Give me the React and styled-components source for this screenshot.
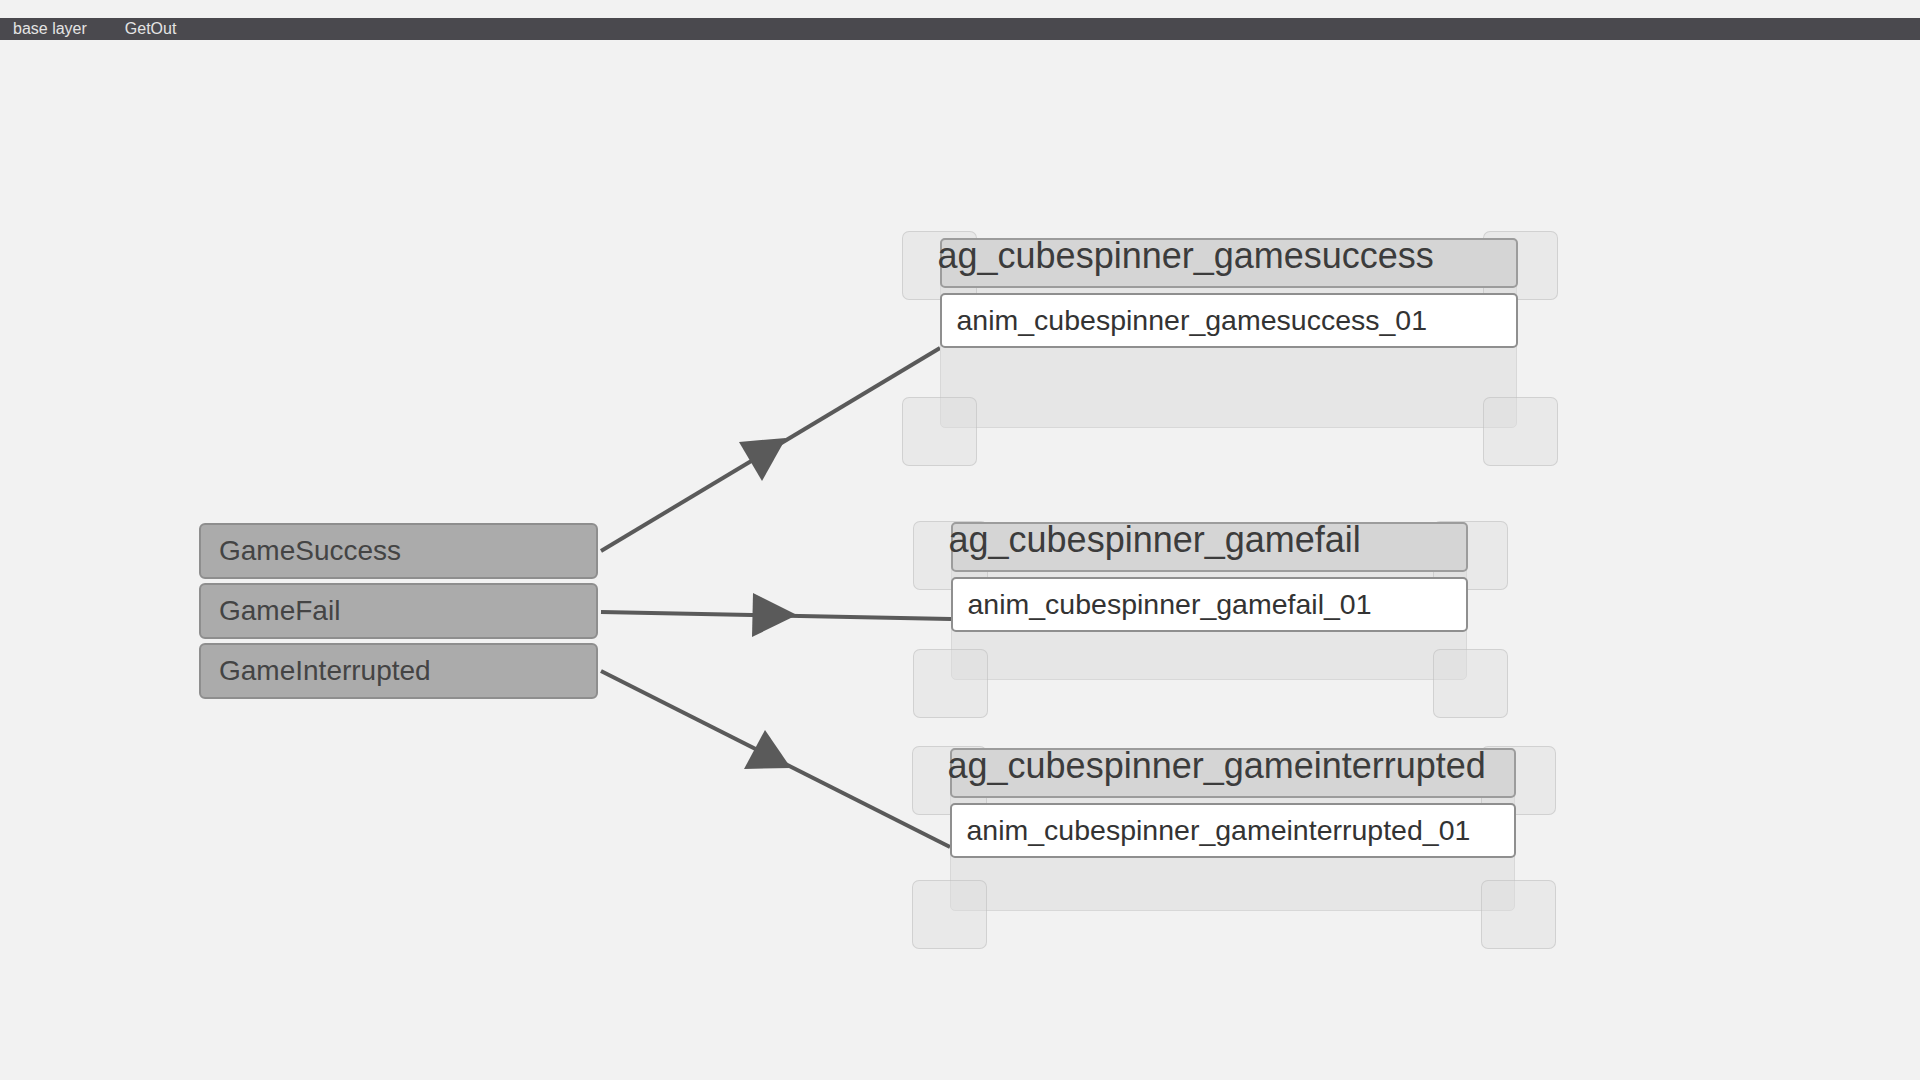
import React from 'react';
import styled, { createGlobalStyle } from 'styled-components';

// canvas coordinates start right under the top bar (page y = 40)
const triggers = ['GameSuccess', 'GameFail', 'GameInterrupted'];

const groups = [
  { title: 'ag_cubespinner_gamesuccess', clip: 'anim_cubespinner_gamesuccess_01', x: 940, y: 198, w: 577, h: 190, lift: -8 },
  { title: 'ag_cubespinner_gamefail', clip: 'anim_cubespinner_gamefail_01', x: 951, y: 482, w: 516, h: 158, lift: -2 },
  { title: 'ag_cubespinner_gameinterrupted', clip: 'anim_cubespinner_gameinterrupted_01', x: 950, y: 708, w: 565, h: 163, lift: -3 },
];

const edges = [
  { from: [601, 511], to: [940, 308], head: '739,402 786,398 762,441' },
  { from: [601, 572], to: [951, 579], head: '753,553 752,597 797,575' },
  { from: [601, 631], to: [950, 807], head: '765,690 744,729 791,728' },
];

const App = () => {
  return (
    <Page>
      <GlobalStyle />
      <TopBar>
        <Crumb>base layer</Crumb>
        <Crumb>GetOut</Crumb>
      </TopBar>
      <Canvas>
        <Wires width="1920" height="1040">
          {edges.map((e, i) => (
            <g key={i}>
              <line x1={e.from[0]} y1={e.from[1]} x2={e.to[0]} y2={e.to[1]} stroke="#5a5a5a" strokeWidth="4" />
              <polygon points={e.head} fill="#5a5a5a" />
            </g>
          ))}
        </Wires>

        <TriggerStack>
          {triggers.map((t) => (
            <Trigger key={t}>{t}</Trigger>
          ))}
        </TriggerStack>

        {groups.map((g) => (
          <Group key={g.title} style={{ left: g.x, top: g.y, width: g.w, height: g.h }}>
            <Handle $top={g.lift} $left={-39} />
            <Handle $top={g.lift} $left={g.w - 35} />
            <Handle $top={g.h - 32} $left={-39} />
            <Handle $top={g.h - 32} $left={g.w - 35} />
            <GroupHeader>{g.title}</GroupHeader>
            <Clip>{g.clip}</Clip>
          </Group>
        ))}
      </Canvas>
    </Page>
  );
};

export default App;

const GlobalStyle = createGlobalStyle`
  html, body {
    margin: 0;
    padding: 0;
    background: #f2f2f2;
  }
  body {
    font-family: "Liberation Sans", Arial, sans-serif;
  }
`;

const Page = styled.div`
  width: 1920px;
  height: 1080px;
  padding-top: 18px;
  box-sizing: border-box;
  display: flex;
  flex-direction: column;
  background: #f2f2f2;
  overflow: hidden;
`;

const TopBar = styled.div`
  height: 22px;
  background: #4a494e;
  display: flex;
  align-items: center;
  gap: 38px;
  padding-left: 13px;
`;

const Crumb = styled.span`
  font-size: 16px;
  color: #e4e4e4;
  line-height: 22px;
`;

const Canvas = styled.div`
  position: relative;
  flex: 1;
`;

const Wires = styled.svg`
  position: absolute;
  left: 0;
  top: 0;
  pointer-events: none;
`;

const TriggerStack = styled.div`
  position: absolute;
  left: 199px;
  top: 483px;
  width: 399px;
  display: flex;
  flex-direction: column;
  gap: 4px;
`;

const Trigger = styled.div`
  height: 56px;
  box-sizing: border-box;
  background: #ababab;
  border: 2px solid #8e8e8e;
  border-radius: 6px;
  padding-left: 18px;
  font-size: 28px;
  line-height: 52px;
  color: #444444;
`;

const Group = styled.div`
  position: absolute;
  box-sizing: border-box;
  background: #e6e6e6;
  border: 1.5px solid #d8d8d8;
  border-radius: 5px;
  display: flex;
  flex-direction: column;
  gap: 5px;
`;

const GroupHeader = styled.div`
  position: relative;
  z-index: 1;
  height: 50px;
  box-sizing: border-box;
  background: #d5d5d5;
  border: 2px solid #9c9c9c;
  border-radius: 5px;
  margin: -1.5px -1.5px 0;
  font-size: 36px;
  line-height: 31px;
  text-indent: -4px;
  color: #3c3c3c;
  white-space: nowrap;
`;

const Clip = styled.div`
  position: relative;
  z-index: 1;
  height: 55px;
  box-sizing: border-box;
  background: #ffffff;
  border: 2px solid #8f8f8f;
  border-radius: 5px;
  margin: 0 -1.5px;
  padding-left: 15px;
  font-size: 28.5px;
  line-height: 51px;
  color: #333333;
  white-space: nowrap;
`;

const Handle = styled.div`
  position: absolute;
  top: ${(p) => p.$top}px;
  left: ${(p) => p.$left}px;
  width: 75px;
  height: 69px;
  box-sizing: border-box;
  background: rgba(222, 222, 222, 0.45);
  border: 1.5px solid rgba(180, 180, 180, 0.45);
  border-radius: 7px;
`;
